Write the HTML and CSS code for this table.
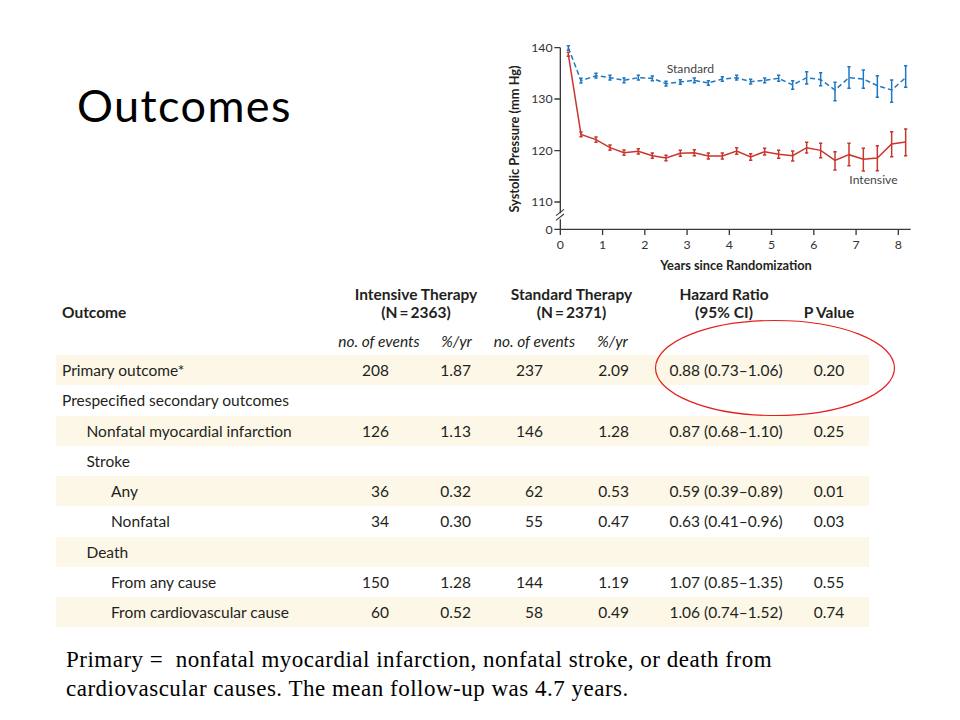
FILE: index.html
```html
<!DOCTYPE html>
<html lang="en">
<head>
<meta charset="utf-8">
<title>Outcomes</title>
<link rel="stylesheet" href="styles.css">
</head>
<body>
<div class="slide">
  <div class="top">
    <h1 class="title">Outcomes</h1>
    <svg class="chart" width="420" height="240" viewBox="0 0 1260 720" xmlns="http://www.w3.org/2000/svg">
      <g class="axis" fill="none" stroke="#3a3a3a" stroke-width="4">
        <path d="M181 38 V535 M181 553 V583 M181 583 H1232"/>
        <path d="M163 38 H181 M163 192 H181 M163 347 H181 M163 501 H181 M163 583 H181"/>
        <path d="M181 583 V600 M307.75 583 V600 M434.5 583 V600 M561.25 583 V600 M688 583 V600 M814.75 583 V600 M941.5 583 V600 M1068.25 583 V600 M1195 583 V600"/>
        <path d="M168 542 L192 523 M168 556 L192 537" stroke-width="3.5"/>
      </g>
      <g class="ticks" font-size="37" fill="#333">
        <text x="158" y="51" text-anchor="end">140</text>
        <text x="158" y="205" text-anchor="end">130</text>
        <text x="158" y="360" text-anchor="end">120</text>
        <text x="158" y="514" text-anchor="end">110</text>
        <text x="158" y="596" text-anchor="end">0</text>
        <text x="181" y="641" text-anchor="middle">0</text>
        <text x="307.75" y="641" text-anchor="middle">1</text>
        <text x="434.5" y="641" text-anchor="middle">2</text>
        <text x="561.25" y="641" text-anchor="middle">3</text>
        <text x="688" y="641" text-anchor="middle">4</text>
        <text x="814.75" y="641" text-anchor="middle">5</text>
        <text x="941.5" y="641" text-anchor="middle">6</text>
        <text x="1068.25" y="641" text-anchor="middle">7</text>
        <text x="1195" y="641" text-anchor="middle">8</text>
      </g>
      <text class="axis-title" x="708" y="704" text-anchor="middle" font-size="38.5">Years since Randomization</text>
      <text class="axis-title" transform="translate(58 312) rotate(-90)" text-anchor="middle" font-size="38.5">Systolic Pressure (mm Hg)</text>
      <text class="series-label" x="500" y="113" font-size="36.5">Standard</text>
      <text class="series-label" x="1048" y="447" font-size="36.5">Intensive</text>

      <polyline class="std-line" fill="none" stroke="#1f78c1" stroke-width="4.5" stroke-dasharray="15 9"
        points="205,38 243,137 288,122 330,128 372,136 415,128 457,130 498,146 541,141 583,136 625,144 667,132 710,128 752,140 794,136 836,130 878,150 920,128 962,134 1005,165 1047,128 1090,132 1132,152 1175,165 1217,128"/>
      <path fill="none" stroke="#1f78c1" stroke-width="4.5"
        d="M205 32V46M200 32H210M200 46H210
           M243 130V144M238 130H248M238 144H248
           M288 115V129M283 115H293M283 129H293
           M330 121V135M325 121H335M325 135H335
           M372 129V143M367 129H377M367 143H377
           M415 121V135M410 121H420M410 135H420
           M457 123V137M452 123H462M452 137H462
           M498 139V153M493 139H503M493 153H503
           M541 134V148M536 134H546M536 148H546
           M583 129V143M578 129H588M578 143H588
           M625 137V151M620 137H630M620 151H630
           M667 125V139M662 125H672M662 139H672
           M710 121V135M705 121H715M705 135H715
           M752 133V147M747 133H757M747 147H757
           M794 129V143M789 129H799M789 143H799
           M836 121V139M831 121H841M831 139H841
           M878 137V163M873 137H883M873 163H883
           M920 110V147M915 110H925M915 147H925
           M962 113V152M957 113H967M957 152H967
           M1005 142V197M1000 142H1010M1000 197H1010
           M1047 95V160M1042 95H1052M1042 160H1052
           M1090 105V160M1085 105H1095M1085 160H1095
           M1132 122V187M1127 122H1137M1127 187H1137
           M1175 135V202M1170 135H1180M1170 202H1180
           M1217 92V157M1212 92H1222M1212 157H1222"/>

      <polyline fill="none" stroke="#c8372d" stroke-width="4.5"
        points="205,58 243,298 288,314 330,338 372,353 415,349 457,362 498,369 541,355 583,353 625,363 667,363 710,348 752,366 794,350 836,358 878,362 920,338 962,346 1005,376 1047,359 1090,373 1132,369 1175,327 1217,321"/>
      <path fill="none" stroke="#c8372d" stroke-width="4.5"
        d="M205 52V64M200 52H210M200 64H210
           M243 291V305M238 291H248M238 305H248
           M288 306V322M283 306H293M283 322H293
           M330 330V346M325 330H335M325 346H335
           M372 345V361M367 345H377M367 361H377
           M415 341V357M410 341H420M410 357H420
           M457 354V370M452 354H462M452 370H462
           M498 361V377M493 361H503M493 377H503
           M541 346V364M536 346H546M536 364H546
           M583 344V362M578 344H588M578 362H588
           M625 354V372M620 354H630M620 372H630
           M667 354V372M662 354H672M662 372H672
           M710 338V358M705 338H715M705 358H715
           M752 356V376M747 356H757M747 376H757
           M794 340V360M789 340H799M789 360H799
           M836 346V370M831 346H841M831 370H841
           M878 348V378M873 348H883M873 378H883
           M920 322V354M915 322H925M915 354H925
           M962 325V368M957 325H967M957 368H967
           M1005 350V405M1000 350H1010M1000 405H1010
           M1047 325V392M1042 325H1052M1042 392H1052
           M1090 340V408M1085 340H1095M1085 408H1095
           M1132 332V407M1127 332H1137M1127 407H1137
           M1175 290V365M1170 290H1180M1170 365H1180
           M1217 282V362M1212 282H1222M1212 362H1222"/>
    </svg>
  </div>

  <div class="table-wrap">
    <div class="grid head1">
      <div class="h outcome">Outcome</div>
      <div class="h group span2">Intensive Therapy<br>(N&#8201;=&#8201;2363)</div>
      <div class="h group span2">Standard Therapy<br>(N&#8201;=&#8201;2371)</div>
      <div class="h hr-head">Hazard Ratio<br>(95% CI)</div>
      <div class="h p-head">P Value</div>
    </div>
    <div class="grid head2">
      <div></div>
      <div class="sub">no. of events</div>
      <div class="sub">%/yr</div>
      <div class="sub">no. of events</div>
      <div class="sub">%/yr</div>
      <div></div>
      <div></div>
    </div>

    <div class="grid row shade">
      <div class="lbl l0">Primary outcome*</div>
      <div class="n c2">208</div><div class="n c3">1.87</div>
      <div class="n c4">237</div><div class="n c5">2.09</div>
      <div class="hr">0.88 (0.73–1.06)</div><div class="p">0.20</div>
    </div>
    <div class="grid row">
      <div class="lbl l0 wide">Prespecified secondary outcomes</div>
    </div>
    <div class="grid row shade">
      <div class="lbl l1">Nonfatal myocardial infarction</div>
      <div class="n c2">126</div><div class="n c3">1.13</div>
      <div class="n c4">146</div><div class="n c5">1.28</div>
      <div class="hr">0.87 (0.68–1.10)</div><div class="p">0.25</div>
    </div>
    <div class="grid row">
      <div class="lbl l1">Stroke</div>
    </div>
    <div class="grid row shade">
      <div class="lbl l2">Any</div>
      <div class="n c2">36</div><div class="n c3">0.32</div>
      <div class="n c4">62</div><div class="n c5">0.53</div>
      <div class="hr">0.59 (0.39–0.89)</div><div class="p">0.01</div>
    </div>
    <div class="grid row">
      <div class="lbl l2">Nonfatal</div>
      <div class="n c2">34</div><div class="n c3">0.30</div>
      <div class="n c4">55</div><div class="n c5">0.47</div>
      <div class="hr">0.63 (0.41–0.96)</div><div class="p">0.03</div>
    </div>
    <div class="grid row shade">
      <div class="lbl l1">Death</div>
    </div>
    <div class="grid row">
      <div class="lbl l2">From any cause</div>
      <div class="n c2">150</div><div class="n c3">1.28</div>
      <div class="n c4">144</div><div class="n c5">1.19</div>
      <div class="hr">1.07 (0.85–1.35)</div><div class="p">0.55</div>
    </div>
    <div class="grid row shade">
      <div class="lbl l2">From cardiovascular cause</div>
      <div class="n c2">60</div><div class="n c3">0.52</div>
      <div class="n c4">58</div><div class="n c5">0.49</div>
      <div class="hr">1.06 (0.74–1.52)</div><div class="p">0.74</div>
    </div>

    <svg class="highlight" width="242" height="98" viewBox="0 0 242 98" xmlns="http://www.w3.org/2000/svg">
      <ellipse cx="121" cy="49" rx="119.5" ry="47.5" fill="none" stroke="#e3211c" stroke-width="1.2"/>
    </svg>
  </div>

  <p class="note">Primary =&nbsp; nonfatal myocardial infarction, nonfatal stroke, or death from<br>cardiovascular causes. The mean follow-up was 4.7 years.</p>
</div>
</body>
</html>
```

FILE: styles.css
```css
* { box-sizing: border-box; }

html, body {
  margin: 0;
  padding: 0;
  background: #ffffff;
}

.slide {
  width: 960px;
  height: 720px;
  overflow: hidden;
  font-family: "Lato", "Open Sans", sans-serif;
  color: #231f20;
}

.top {
  display: flex;
  justify-content: space-between;
  align-items: flex-start;
  height: 275px;
}

.title {
  margin: 79px 0 0 77px;
  font-family: "Lato", sans-serif;
  font-weight: 400;
  font-size: 45px;
  letter-spacing: 1.4px;
  line-height: 52px;
  color: #000;
}

.chart {
  display: block;
  margin: 35px 40px 0 0;
}

.chart text {
  font-family: "Lato", sans-serif;
}

.axis-title {
  font-weight: 700;
  fill: #231f20;
}

.series-label {
  fill: #444;
}

.table-wrap {
  position: relative;
  width: 813px;
  margin: 10px 0 0 56px;
  font-size: 15.5px;
}

.grid {
  display: grid;
  grid-template-columns: 278px 90px 65px 91px 65px 162px 62px;
}

.head1 {
  height: 36px;
  line-height: 18px;
  font-weight: 700;
}

.h.outcome {
  align-self: end;
  padding-left: 6px;
}

.h.group {
  grid-column: span 2;
  text-align: center;
  padding-left: 9px;
  white-space: nowrap;
}

.h.hr-head {
  text-align: center;
  padding-right: 4px;
  white-space: nowrap;
}

.h.p-head {
  align-self: end;
  display: flex;
  justify-content: center;
  padding-right: 18px;
  white-space: nowrap;
}

.head2 {
  height: 34px;
  padding-top: 8px;
  line-height: 25px;
}

.sub {
  font-style: italic;
  text-align: center;
  white-space: nowrap;
}

.row {
  height: 30.25px;
  align-items: center;
  line-height: 20px;
}

.row.shade {
  background: #fdf7e8;
}

.lbl { white-space: nowrap; }
.lbl.l0 { padding-left: 6px; }
.lbl.l1 { padding-left: 30.5px; }
.lbl.l2 { padding-left: 55px; }
.lbl.wide { grid-column: span 3; }

.n { text-align: right; }
.n.c2 { padding-right: 35px; }
.n.c3 { padding-right: 18px; }
.n.c4 { padding-right: 37px; }
.n.c5 { padding-right: 16px; }

.hr {
  text-align: center;
  white-space: nowrap;
}

.p {
  text-align: center;
  padding-right: 18px;
}

.highlight {
  position: absolute;
  left: 598px;
  top: 34px;
}

.note {
  margin: 18px 0 0 66px;
  font-family: "Liberation Serif", "Times New Roman", serif;
  font-size: 23px;
  letter-spacing: 0.5px;
  line-height: 29px;
  color: #000;
  white-space: nowrap;
}
```
